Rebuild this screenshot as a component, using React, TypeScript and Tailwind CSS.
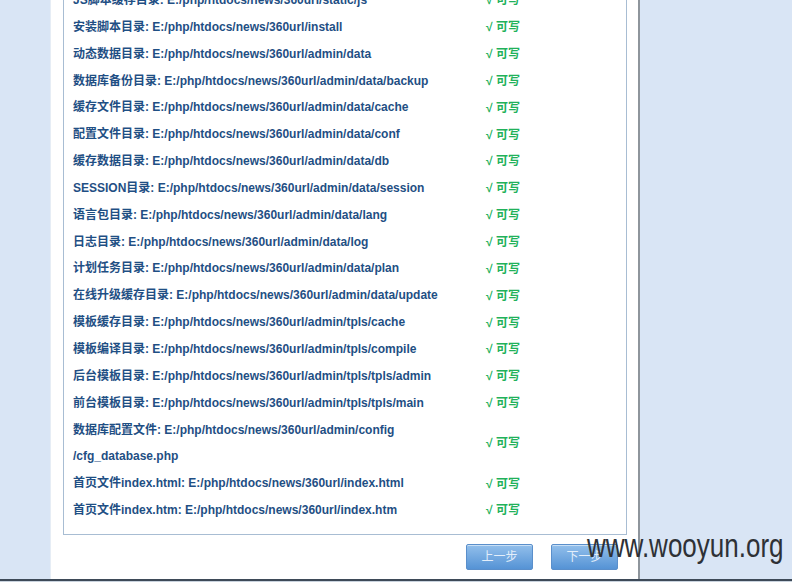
const base = "E:/php/htdocs/news/360url";

const rows: { label: string; path: string; second?: string }[] = [
  { label: "JS脚本缓存目录", path: `${base}/static/js` },
  { label: "安装脚本目录", path: `${base}/install` },
  { label: "动态数据目录", path: `${base}/admin/data` },
  { label: "数据库备份目录", path: `${base}/admin/data/backup` },
  { label: "缓存文件目录", path: `${base}/admin/data/cache` },
  { label: "配置文件目录", path: `${base}/admin/data/conf` },
  { label: "缓存数据目录", path: `${base}/admin/data/db` },
  { label: "SESSION目录", path: `${base}/admin/data/session` },
  { label: "语言包目录", path: `${base}/admin/data/lang` },
  { label: "日志目录", path: `${base}/admin/data/log` },
  { label: "计划任务目录", path: `${base}/admin/data/plan` },
  { label: "在线升级缓存目录", path: `${base}/admin/data/update` },
  { label: "模板缓存目录", path: `${base}/admin/tpls/cache` },
  { label: "模板编译目录", path: `${base}/admin/tpls/compile` },
  { label: "后台模板目录", path: `${base}/admin/tpls/tpls/admin` },
  { label: "前台模板目录", path: `${base}/admin/tpls/tpls/main` },
  { label: "数据库配置文件", path: `${base}/admin/config`, second: "/cfg_database.php" },
  { label: "首页文件index.html", path: `${base}/index.html` },
  { label: "首页文件index.htm", path: `${base}/index.htm` },
];

function StepButton({ text }: { text: string }) {
  return (
    <button className="h-[26px] w-[67px] rounded-[2px] border border-[#5a8fcb] bg-gradient-to-b from-[#92bfeb] to-[#5593d5] text-[12px] text-[#e3eefa] shadow-[inset_0_1px_0_rgba(255,255,255,0.5)]">
      {text}
    </button>
  );
}

export default function App() {
  return (
    <div
      className="relative flex h-[582px] w-[792px] flex-col overflow-hidden bg-[#d9e5f5]"
      style={{ fontFamily: '"Liberation Sans", "Noto Sans CJK SC", sans-serif' }}
    >
      <div className="flex min-h-0 flex-1">
        <div className="w-[50px] shrink-0" />
        <div className="flex w-[590px] shrink-0 flex-col border-l border-[#e6edf5] border-r-2 border-r-[#8e959c] bg-white pl-[12px] pr-[11px]">
          <div className="-mt-[14px] border border-[#a8bdd3] pb-[10px] pl-[9px]">
            {rows.map((r) => (
              <div key={r.label} className="flex items-center">
                <div className="w-[413px] shrink-0 text-[12px] font-bold leading-[26.85px] text-[#1f4f84]">
                  {r.label}: {r.path}
                  {r.second && (
                    <>
                      <br />
                      {r.second}
                    </>
                  )}
                </div>
                <div className="text-[12px] font-bold text-[#21b15a]">√ 可写</div>
              </div>
            ))}
          </div>
          <div className="mt-[9px] flex justify-end gap-[18px] pr-[9px]">
            <StepButton text="上一步" />
            <StepButton text="下一步" />
          </div>
        </div>
      </div>
      <div className="h-[3px] shrink-0 border-t-2 border-[#3e4a58] bg-[#c9d3de]" />
      <div
        className="pointer-events-none absolute left-[587px] top-[532px] origin-bottom scale-y-125 text-[26px] text-[#2e3136]"
        style={{ fontFamily: '"Liberation Sans", Arial, sans-serif' }}
      >
        www.wooyun.org
      </div>
    </div>
  );
}
